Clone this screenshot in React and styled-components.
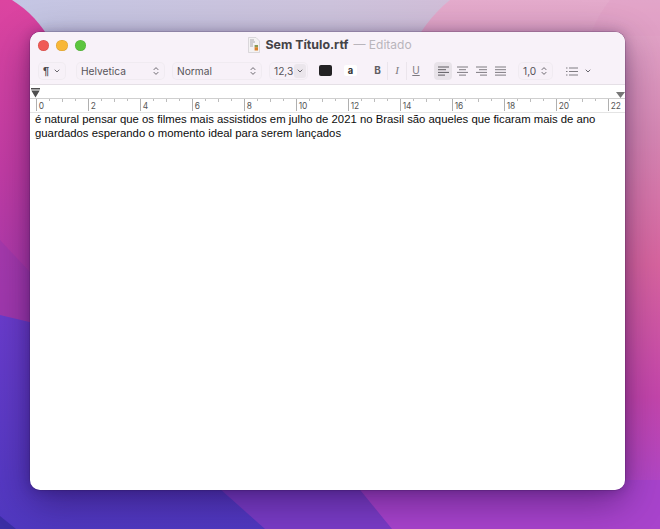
import React from "react";
import styled, { createGlobalStyle } from "styled-components";

const Global = createGlobalStyle`
  html, body { margin: 0; padding: 0; background: #8a3ab0; }
  * { box-sizing: border-box; }
`;

const Desktop = styled.div`
  position: relative;
  width: 660px;
  height: 529px;
  overflow: hidden;
  padding: 32px 0 0 30px;
`;

const WallpaperArt = styled.svg`
  position: absolute;
  inset: 0;
  width: 660px;
  height: 529px;
`;

const Window = styled.main`
  position: relative;
  width: 595px;
  height: 458px;
  border-radius: 10px;
  overflow: hidden;
  background: #fff;
  display: flex;
  flex-direction: column;
`;

const WindowShadow = styled.div`
  position: absolute;
  left: 30px;
  top: 32px;
  width: 595px;
  height: 458px;
  border-radius: 10px;
  box-shadow: 0 12px 38px rgba(20, 0, 50, 0.42), 0 0 12px rgba(20, 0, 50, 0.25), 0 0 0 0.5px rgba(60, 30, 80, 0.35);
`;

const TitleBar = styled.header`
  position: relative;
  height: 26px;
  flex: none;
  background: #f8f2f9;
  display: flex;
  align-items: center;
  justify-content: center;
  padding-left: 5px;
`;

const Lights = styled.div`
  position: absolute;
  left: 7.5px;
  top: 7.5px;
  display: flex;
  gap: 7px;
`;

const Light = styled.span`
  width: 11.5px;
  height: 11.5px;
  border-radius: 50%;
  background: ${(p) => p.$color};
  box-shadow: inset 0 0 0 0.5px rgba(0, 0, 0, 0.12);
`;

const TitleName = styled.span`
  font: 700 12.4px/16px Inter, "Noto Sans", sans-serif;
  color: #454347;
  margin-left: 5px;
`;

const TitleEdited = styled.span`
  font: 400 12px/16px Inter, "Noto Sans", sans-serif;
  color: #b9b5bc;
  margin-left: 5px;
`;

const Toolbar = styled.div`
  height: 27px;
  flex: none;
  background: #f8f2f9;
  border-bottom: 1px solid #e5e0e6;
  display: flex;
  align-items: flex-start;
  padding: 4px 0 0 8px;
`;

const Control = styled.div`
  width: ${(p) => p.$w}px;
  height: 18px;
  margin-left: ${(p) => p.$ml || 0}px;
  border-radius: 5px;
  background: #f7f1f8;
  box-shadow: inset 0 0 0 1px #f0ebf1;
  display: flex;
  align-items: center;
  justify-content: space-between;
  padding: 0 6px 1px 5px;
  font: 400 10.2px/16px Inter, "Noto Sans", sans-serif;
  color: #565458;
  flex: none;
`;

const Pilcrow = styled.span`
  font: 700 11px/16px "Liberation Sans", sans-serif;
  color: #4a484c;
`;

const SizeChevron = styled.span`
  width: 12px;
  height: 14px;
  border-radius: 3px;
  background: #ebe6ec;
  display: flex;
  align-items: center;
  justify-content: center;
  margin-right: -4px;
`;

const ColorWell = styled.span`
  width: 13px;
  height: 11px;
  margin: 3px 0 0 11px;
  border-radius: 2px;
  background: #232224;
  flex: none;
`;

const HighlightWell = styled.span`
  width: 13px;
  height: 11px;
  margin: 3px 0 0 12px;
  border-radius: 2px;
  background: #fff;
  font: 700 9.4px/11px Inter, sans-serif;
  color: #333;
  text-align: center;
  flex: none;
`;

const StyleButton = styled.span`
  width: 19px;
  height: 18px;
  flex: none;
  margin-left: ${(p) => p.$ml || 0}px;
  border-left: ${(p) => (p.$sep ? "1px solid #ebe5ec" : "none")};
  text-align: center;
  font-family: ${(p) => (p.$italic ? '"Liberation Serif", serif' : "Inter, sans-serif")};
  font-size: ${(p) => (p.$italic ? "11px" : "10px")};
  line-height: 17px;
  font-weight: ${(p) => (p.$bold ? 700 : 400)};
  font-style: ${(p) => (p.$italic ? "italic" : "normal")};
  text-decoration: ${(p) => (p.$under ? "underline" : "none")};
  color: ${(p) => (p.$bold ? "#5f5d62" : "#7d7a80")};
`;

const AlignButton = styled.span`
  width: 18px;
  height: 18px;
  flex: none;
  margin-left: ${(p) => p.$ml || 0}px;
  border-radius: 4px;
  background: ${(p) => (p.$active ? "#e8e3e9" : "transparent")};
  display: flex;
  align-items: center;
  justify-content: center;
`;

const IconSlot = styled.span`
  margin-left: ${(p) => p.$ml || 0}px;
  height: 18px;
  display: flex;
  align-items: center;
  flex: none;
`;

const Ruler = styled.div`
  position: relative;
  height: 28px;
  flex: none;
  background: #fff;
  border-bottom: 1px solid #e4e4e4;
  padding-top: 13px;
`;

const RulerScale = styled.div`
  display: flex;
  height: 14px;
  border-top: 1px solid #cfcfcf;
  padding-left: 5.7px;
`;

const Mark = styled.span`
  width: 52px;
  flex: none;
  height: 12px;
  border-left: 1px solid #b0b0b0;
  padding: 3px 0 0 2px;
  font: 400 8.4px/9px Inter, "Noto Sans", sans-serif;
  color: #555;
  background:
    linear-gradient(#bdbdbd, #bdbdbd) 12px 0 / 1px 2px no-repeat,
    linear-gradient(#bdbdbd, #bdbdbd) 25px 0 / 1px 3px no-repeat,
    linear-gradient(#bdbdbd, #bdbdbd) 38px 0 / 1px 2px no-repeat;
`;

const LastMark = styled(Mark)`
  width: 14px;
  background: none;
`;

const LeftMarker = styled.svg`
  position: absolute;
  left: 1px;
  top: 3px;
`;

const RightMarker = styled.svg`
  position: absolute;
  right: 0;
  top: 7px;
`;

const Body = styled.div`
  flex: 1;
  margin-top: -1px;
  padding: 0 5px;
  font: 400 11.33px/14px "Liberation Sans", Arial, sans-serif;
  color: #0c0c0c;
`;

const Stepper = () => (
  <svg width="6" height="10" viewBox="0 0 6 10" fill="none" stroke="#6a676e" strokeWidth="1" strokeLinecap="round" strokeLinejoin="round">
    <path d="M1 3.6 3 1.6 5 3.6" />
    <path d="M1 6.4 3 8.4 5 6.4" />
  </svg>
);

const Chevron = () => (
  <svg width="6" height="4" viewBox="0 0 6 4" fill="none" stroke="#6a676e" strokeWidth="1" strokeLinecap="round" strokeLinejoin="round">
    <path d="M1 1 3 3 5 1" />
  </svg>
);

const AlignIcon = ({ kind, dark }) => {
  const rows = {
    left: [[0, 11], [0, 8], [0, 11], [0, 7]],
    center: [[0, 11], [2, 7], [0, 11], [2, 7]],
    right: [[0, 11], [3, 8], [0, 11], [4, 7]],
    just: [[0, 11], [0, 11], [0, 11], [0, 11]],
  }[kind];
  return (
    <svg width="11" height="10" viewBox="0 0 11 10">
      {rows.map(([x, w], i) => (
        <rect key={i} x={x} y={0.5 + i * 2.7} width={w} height="1" fill={dark ? "#5f5c62" : "#7f7c82"} />
      ))}
    </svg>
  );
};

const DocIcon = () => (
  <svg width="12" height="16" viewBox="0 0 12 16">
    <path d="M.5.5H8L11.5 4V15.5H.5Z" fill="#f4f2f3" stroke="#cfcbd0" strokeWidth=".7" />
    <path d="M2 3H6M2 5H7M2 7H5M2 9H5" stroke="#9a979c" strokeWidth=".8" />
    <rect x="6.6" y="8" width="3.4" height="2.2" fill="#8a9a55" />
    <rect x="6.6" y="10.2" width="3.4" height="3.3" fill="#d9822b" />
  </svg>
);

const Wallpaper = () => (
  <WallpaperArt viewBox="0 0 660 529" preserveAspectRatio="none">
    <defs>
      <linearGradient id="sky" x1="0" y1="0" x2="1" y2="0">
        <stop offset="0" stopColor="#c4c6e4" />
        <stop offset=".5" stopColor="#cdc3dc" />
        <stop offset="1" stopColor="#d8b6d2" />
      </linearGradient>
      <linearGradient id="right" x1="0" y1="0" x2="0" y2="1">
        <stop offset="0" stopColor="#e4abcc" />
        <stop offset=".25" stopColor="#d687b4" />
        <stop offset=".5" stopColor="#d8649f" />
        <stop offset=".75" stopColor="#c445ab" />
        <stop offset="1" stopColor="#a747d4" />
      </linearGradient>
      <linearGradient id="leftPink" x1="0" y1="0" x2="0" y2="1">
        <stop offset="0" stopColor="#dc44a0" />
        <stop offset=".5" stopColor="#c23ca4" />
        <stop offset="1" stopColor="#a038ae" />
      </linearGradient>
      <linearGradient id="indigo" x1="0" y1="0" x2="0" y2="1">
        <stop offset="0" stopColor="#6a3ccc" />
        <stop offset="1" stopColor="#5038c0" />
      </linearGradient>
    </defs>
    <rect width="660" height="80" fill="url(#sky)" />
    <path d="M405 60C418 34 432 14 450 0H660V529H380V60Z" fill="url(#right)" />
    <path d="M590 36C595 22 602 10 610 0H660V36Z" fill="#e09ac2" opacity=".35" />
    <path d="M0 0H12C28 10 42 24 52 44L60 60V340H0Z" fill="url(#leftPink)" />
    <path d="M0 240L30 272V325H0Z" fill="#9a38ae" opacity=".55" />
    <path d="M0 315L80 334V480L300 480V529H0Z" fill="url(#indigo)" />
    <path d="M0 516L16 529H0Z" fill="#3b2fa4" />
    <path d="M210 480H400V529H265Z" fill="#7a3cc6" />
    <path d="M352 480H660V529H392Z" fill="#a843cc" />
  </WallpaperArt>
);

const marks = [0, 2, 4, 6, 8, 10, 12, 14, 16, 18, 20];

export default function App() {
  return (
    <>
      <Global />
      <Desktop>
        <Wallpaper />
        <WindowShadow />
        <Window>
          <TitleBar>
            <Lights>
              <Light $color="#f05a55" />
              <Light $color="#f8b738" />
              <Light $color="#5cc53f" />
            </Lights>
            <DocIcon />
            <TitleName>Sem Título.rtf</TitleName>
            <TitleEdited>— Editado</TitleEdited>
          </TitleBar>

          <Toolbar>
            <Control $w={28}>
              <Pilcrow>¶</Pilcrow>
              <Chevron />
            </Control>
            <Control $w={89} $ml={10}>
              <span>Helvetica</span>
              <Stepper />
            </Control>
            <Control $w={90} $ml={7}>
              <span>Normal</span>
              <Stepper />
            </Control>
            <Control $w={39} $ml={7}>
              <span>12,3</span>
              <SizeChevron>
                <Chevron />
              </SizeChevron>
            </Control>
            <ColorWell />
            <HighlightWell>a</HighlightWell>
            <StyleButton $bold $ml={11}>B</StyleButton>
            <StyleButton $italic $sep>I</StyleButton>
            <StyleButton $under $sep>U</StyleButton>
            <AlignButton $active $ml={9}><AlignIcon kind="left" dark /></AlignButton>
            <AlignButton $ml={1}><AlignIcon kind="center" /></AlignButton>
            <AlignButton $ml={1}><AlignIcon kind="right" /></AlignButton>
            <AlignButton $ml={1}><AlignIcon kind="just" /></AlignButton>
            <Control $w={35} $ml={9}>
              <span>1,0</span>
              <Stepper />
            </Control>
            <IconSlot $ml={13}>
              <svg width="12" height="9" viewBox="0 0 12 9" fill="none" stroke="#7f7c82">
                <path d="M0 1H1.5M3 1H12M0 4.5H1.5M3 4.5H12M0 8H1.5M3 8H12" />
              </svg>
            </IconSlot>
            <IconSlot $ml={7}>
              <Chevron />
            </IconSlot>
          </Toolbar>

          <Ruler>
            <LeftMarker width="9" height="10" viewBox="0 0 9 10">
              <path d="M0 0H9V1.4H0ZM.3 2.6H8.7L4.5 9.5Z" fill="#4f4f4f" />
            </LeftMarker>
            <RightMarker width="9" height="6" viewBox="0 0 9 6">
              <path d="M0 0H9L4.5 6Z" fill="#777" />
            </RightMarker>
            <RulerScale>
              {marks.map((n) => (
                <Mark key={n}>{n}</Mark>
              ))}
              <LastMark>22</LastMark>
            </RulerScale>
          </Ruler>

          <Body>
            é natural pensar que os filmes mais assistidos em julho de 2021 no Brasil são aqueles que ficaram mais de ano guardados esperando o momento ideal para serem lançados
          </Body>
        </Window>
      </Desktop>
    </>
  );
}
